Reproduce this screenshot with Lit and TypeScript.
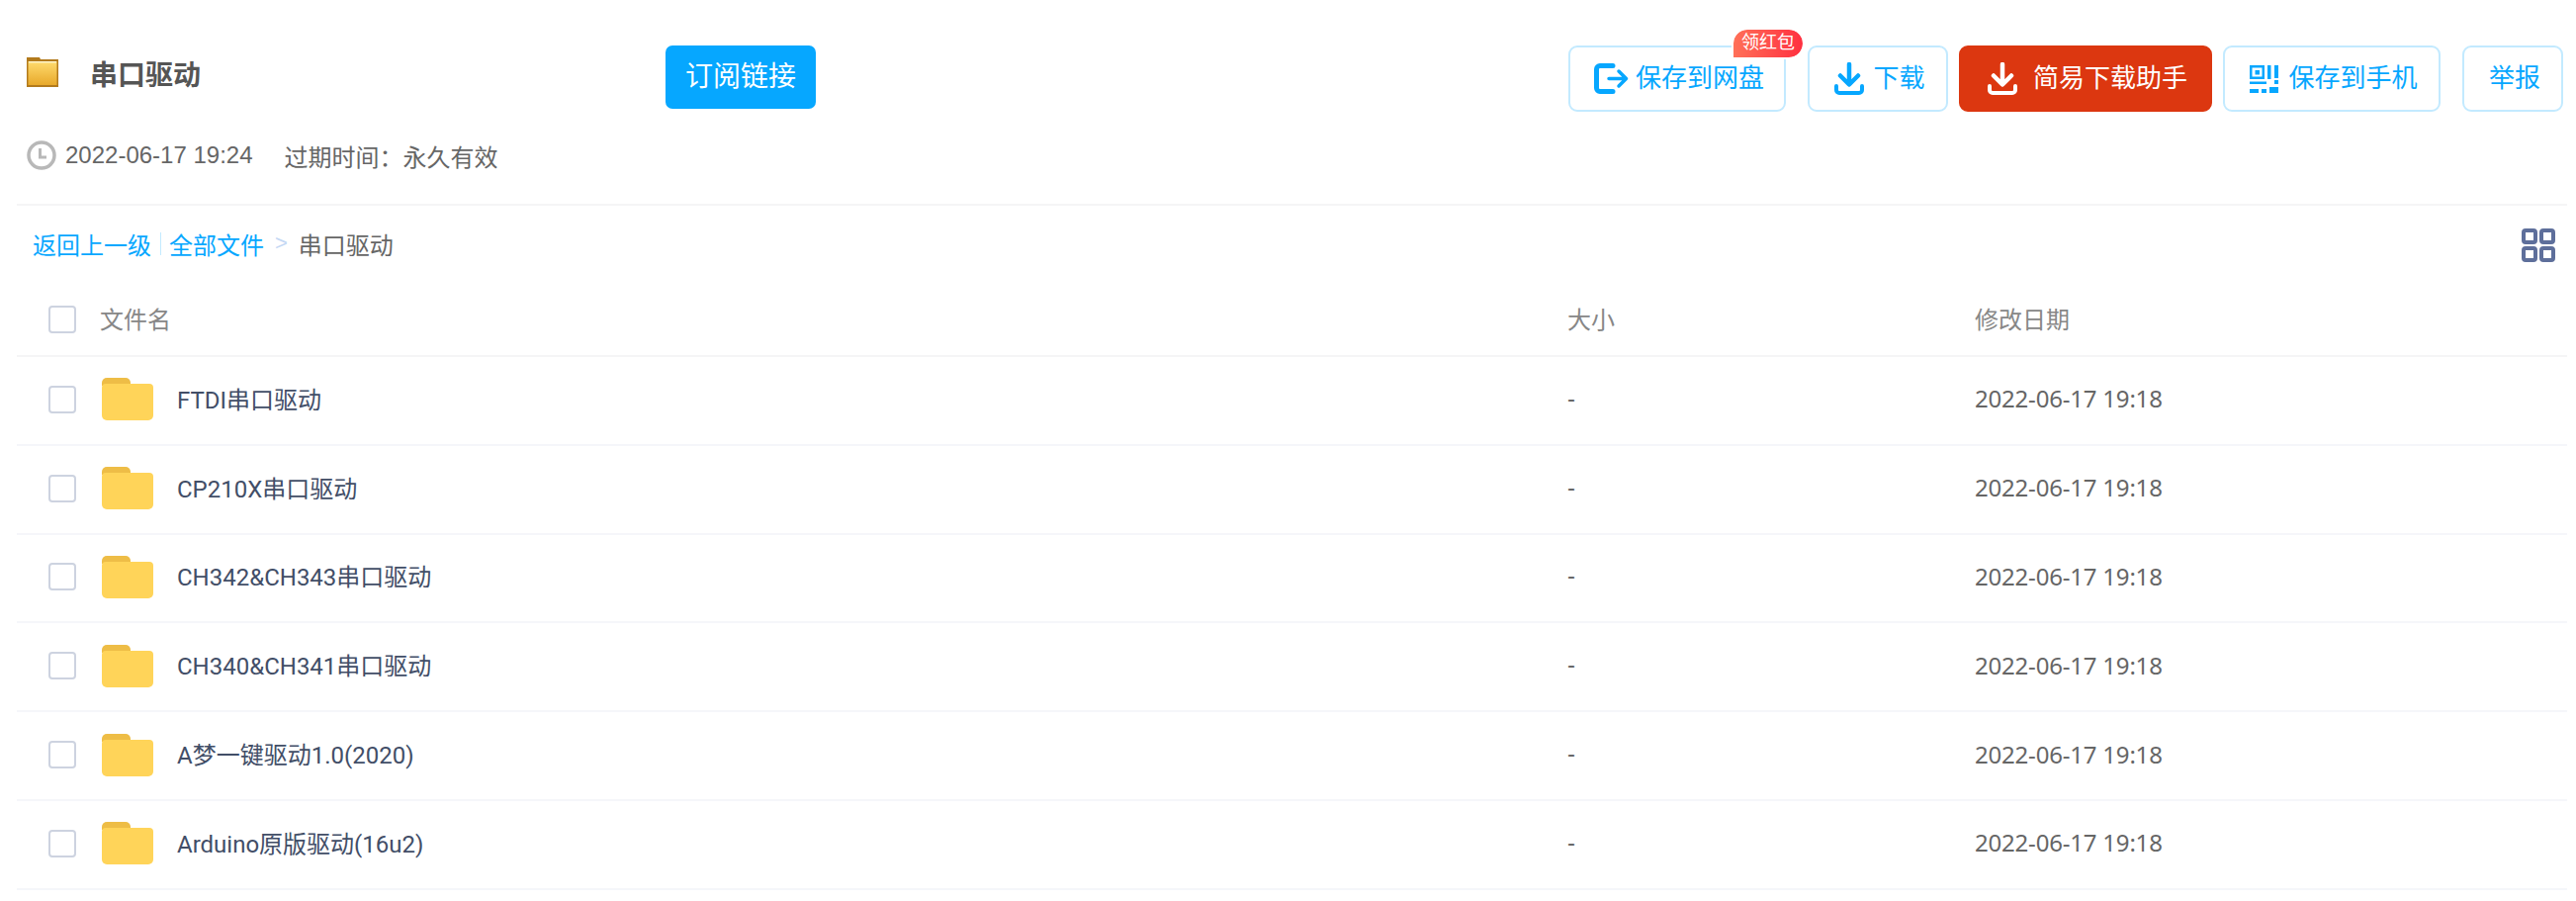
import { LitElement, html, css, svg } from 'lit';
import { customElement } from 'lit/decorators.js';

const files = [
  'FTDI串口驱动',
  'CP210X串口驱动',
  'CH342&CH343串口驱动',
  'CH340&CH341串口驱动',
  'A梦一键驱动1.0(2020)',
  'Arduino原版驱动(16u2)',
];

const downloadIcon = svg`<path d="M15 2v20M6 13.500 15 22.500l9-9" fill="none" stroke="currentColor" stroke-width="4.500" stroke-linecap="round" stroke-linejoin="round"/><path d="M2 24v4a3 3 0 0 0 3 3h20a3 3 0 0 0 3-3v-4" fill="none" stroke="currentColor" stroke-width="4" stroke-linecap="round"/>`;

@customElement('app-root')
export class AppRoot extends LitElement {
  static styles = css`
    :host {
      display: block;
      height: 911px;
      overflow: hidden;
      background: #fff;
      padding: 46px 9px 0 17px;
      box-sizing: border-box;
      font-family: 'Liberation Sans', 'Noto Sans CJK SC', sans-serif;
      font-size: 24px;
      color: #666;
    }

    .top {
      display: flex;
      justify-content: space-between;
      height: 67px;
    }

    .title-row {
      display: flex;
      align-items: flex-start;
    }

    .title-folder {
      width: 32px;
      height: 30px;
      margin: 12px 0 0 10px;
    }

    .title {
      width: 582px;
      margin: 11px 0 0 32px;
      font-size: 28px;
      line-height: 40px;
      font-weight: 700;
      color: #555;
    }

    .subscribe {
      width: 152px;
      height: 64px;
      line-height: 63px;
      text-align: center;
      border-radius: 7px;
      background: #06a7ff;
      color: #fff;
      font-size: 28px;
    }

    .actions {
      display: flex;
      gap: 11px;
      padding-right: 4px;
    }

    .btn {
      position: relative;
      display: flex;
      align-items: center;
      justify-content: center;
      box-sizing: border-box;
      height: 67px;
      padding: 0 0 6px 4px;
      border: 2px solid #c3eaff;
      border-radius: 9px;
      color: #06a7ff;
      font-size: 26px;
      gap: 7px;
    }

    .btn svg {
      flex: none;
      margin-top: 6px;
    }

    .btn.save {
      width: 220px;
    }

    .btn.down {
      width: 142px;
      margin-left: 11px;
      gap: 9px;
    }

    .btn.helper {
      width: 256px;
      background: #dc3710;
      border-color: #dc3710;
      color: #fff;
      gap: 16px;
    }

    .btn.phone {
      width: 220px;
      gap: 10px;
    }

    .btn.report {
      width: 102px;
      margin-left: 11px;
    }

    .badge {
      position: absolute;
      top: -18px;
      right: -19px;
      width: 70px;
      height: 28px;
      line-height: 27px;
      text-align: center;
      background: linear-gradient(90deg, #ff7058, #ff3040);
      border-radius: 14px 14px 14px 0;
      outline: 2px solid #fff;
      color: #fff;
      font-size: 18px;
    }

    .meta {
      display: flex;
      align-items: center;
      height: 36px;
      margin: 26px 0 0 10px;
    }

    .clock {
      width: 30px;
      height: 30px;
      margin-right: 9px;
    }

    .meta .expire {
      margin-left: 32px;
    }

    .crumbs {
      display: flex;
      align-items: center;
      justify-content: space-between;
      height: 81px;
      margin-top: 31px;
      padding: 0 12px 0 16px;
      border-top: 2px solid #f5f5f6;
      box-sizing: border-box;
    }

    .crumb-text {
      display: flex;
      align-items: center;
      padding-bottom: 3px;
    }

    .link {
      color: #06a7ff;
    }

    .sep {
      width: 1px;
      height: 23px;
      background: #c3eaff;
      margin: 0 8px 0 9px;
    }

    .arrow {
      color: #c4d8f4;
      margin: 0 11px;
      font-size: 22px;
    }

    .grid-icon {
      width: 34px;
      height: 34px;
    }

    .row {
      display: grid;
      grid-template-columns: 1568px 412px 1fr;
      align-items: center;
      height: 89.800px;
      padding-bottom: 2px;
      box-sizing: border-box;
      border-bottom: 2px solid #f5f6fa;
    }

    .row.head {
      height: 74px;
      padding-bottom: 0;
      color: #878787;
      border-bottom-color: #f5f5f6;
    }

    .head .label {
      padding-bottom: 3px;
    }

    .name {
      display: flex;
      align-items: center;
      padding-left: 32px;
    }

    .check {
      box-sizing: border-box;
      width: 28px;
      height: 28px;
      border: 2px solid #cdd3e0;
      border-radius: 4px;
      margin-right: 26px;
    }

    .head .check {
      margin-right: 24px;
    }

    .folder {
      width: 52px;
      height: 43px;
      margin-right: 24px;
    }

    .file-name {
      color: #424e67;
      padding-bottom: 3px;
      font-family: 'Roboto', 'Noto Sans CJK SC', sans-serif;
    }

    .date {
      font-family: 'Noto Sans', 'Noto Sans CJK SC', sans-serif;
      letter-spacing: -0.2px;
      padding-bottom: 2px;
    }

    .size {
      padding-bottom: 2px;
    }

    .head .date {
      letter-spacing: 0;
    }
  `;

  render() {
    return html`
      <div class="top">
        <div class="title-row">
          <svg class="title-folder" viewBox="0 0 32 30">
            <defs>
              <linearGradient id="tf" x1="0" y1="0" x2="0" y2="1">
                <stop offset="0" stop-color="#ffdb6e" />
                <stop offset="1" stop-color="#e8a92b" />
              </linearGradient>
            </defs>
            <path d="M0 0h13l1 2h18v28H0z" fill="#b27a1c" />
            <path d="M1.500 4h29v24h-29z" fill="url(#tf)" />
            <path d="M2 4h28v1.500H2z" fill="#fff3c8" />
          </svg>
          <div class="title">串口驱动</div>
          <div class="subscribe">订阅链接</div>
        </div>
        <div class="actions">
          <div class="btn save">
            <svg width="35" height="31" viewBox="0 0 35 31">
              <path d="M19 2.500H6A3.500 3.500 0 0 0 2.500 6v19A3.500 3.500 0 0 0 6 28.500h13" fill="none" stroke="currentColor" stroke-width="5" stroke-linecap="round" />
              <path d="M15 15.500h17M25 8l7.500 7.500L25 23" fill="none" stroke="currentColor" stroke-width="3.500" stroke-linecap="round" stroke-linejoin="round" />
            </svg>
            保存到网盘
            <span class="badge">领红包</span>
          </div>
          <div class="btn down">
            <svg width="30" height="33" viewBox="0 0 30 33">${downloadIcon}</svg>
            下载
          </div>
          <div class="btn helper">
            <svg width="30" height="33" viewBox="0 0 30 33">${downloadIcon}</svg>
            简易下载助手
          </div>
          <div class="btn phone">
            <svg width="29" height="28" viewBox="0 0 29 28" fill="currentColor">
              <path fill-rule="evenodd" d="M0 0h15v14H0zM2.500 2.500v9h10v-9z" />
              <path d="M5.500 5h4.500v4.500H5.500zM18 0h3.500v14H18zM25 0h4v13h-4zM25 15h4v4h-4zM0 16.500h17V19H0zM0 24h9v4H0zM12 24h5v4h-5zM20 22h9v6h-9z" />
            </svg>
            保存到手机
          </div>
          <div class="btn report">举报</div>
        </div>
      </div>

      <div class="meta">
        <svg class="clock" viewBox="0 0 30 30">
          <circle cx="15" cy="15" r="13" fill="none" stroke="#b8b8b8" stroke-width="3.500" />
          <path d="M13.500 8v9H20" fill="none" stroke="#b8b8b8" stroke-width="3" />
        </svg>
        <span>2022-06-17 19:24</span>
        <span class="expire">过期时间：永久有效</span>
      </div>

      <div class="crumbs">
        <div class="crumb-text">
          <span class="link">返回上一级</span>
          <span class="sep"></span>
          <span class="link">全部文件</span>
          <span class="arrow">&gt;</span>
          <span>串口驱动</span>
        </div>
        <svg class="grid-icon" viewBox="0 0 34 34" fill="none" stroke="#5e6f9b" stroke-width="4">
          <rect x="2" y="2" width="12" height="12" rx="2" />
          <rect x="20" y="2" width="12" height="12" rx="2" />
          <rect x="2" y="20" width="12" height="12" rx="2" />
          <rect x="20" y="20" width="12" height="12" rx="2" />
        </svg>
      </div>

      <div class="row head">
        <div class="name"><span class="check"></span><span class="label">文件名</span></div>
        <div class="label">大小</div>
        <div class="label">修改日期</div>
      </div>
      ${files.map(
        (f) => html`
          <div class="row">
            <div class="name">
              <span class="check"></span>
              <svg class="folder" viewBox="0 0 52 43">
                <path d="M0 5a5 5 0 0 1 5-5h19a5 5 0 0 1 5 5v3H0z" fill="#eebd46" />
                <path d="M0 10a4 4 0 0 1 4-4h44a4 4 0 0 1 4 4v28a5 5 0 0 1-5 5H5a5 5 0 0 1-5-5z" fill="#ffd459" />
              </svg>
              <span class="file-name">${f}</span>
            </div>
            <div class="size">-</div>
            <div class="date">2022-06-17 19:18</div>
          </div>
        `
      )}
    `;
  }
}
